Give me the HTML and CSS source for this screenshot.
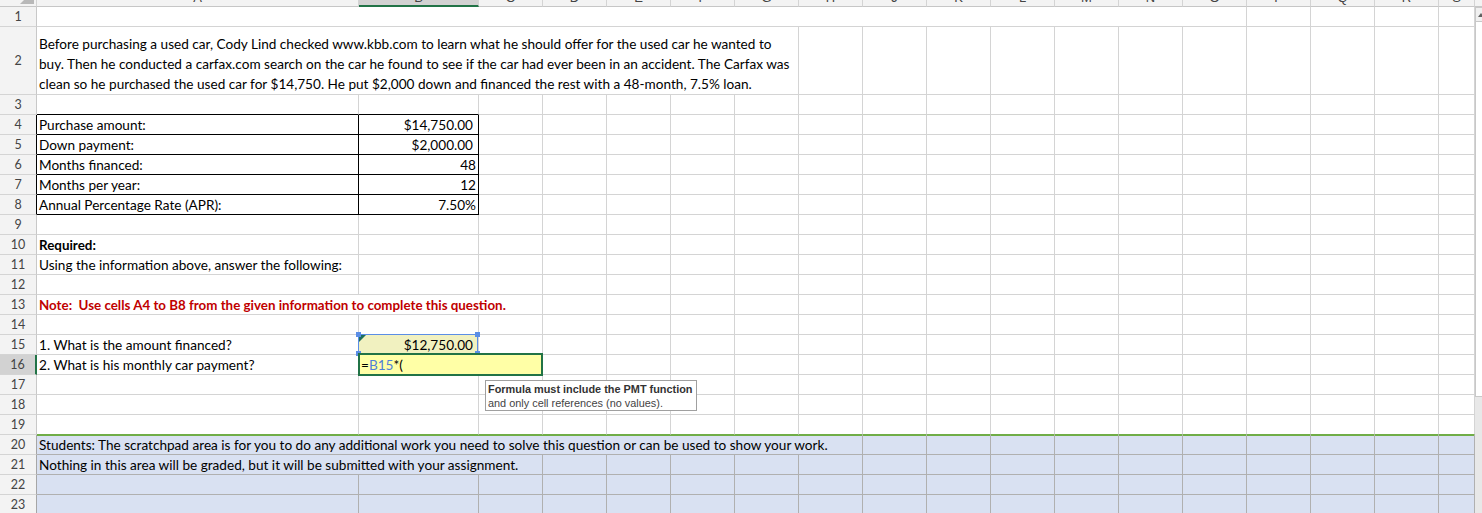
FILE: index.html
```html
<!DOCTYPE html>
<html>
<head>
<meta charset="utf-8">
<link rel="stylesheet" href="styles.css">
</head>
<body>
<div class="app">
  <div class="sheet">
    <div class="row hdr">
      <div class="corner"><span class="tri"></span></div>
      <div class="ch">A</div><div class="ch sel">B</div><div class="ch">C</div><div class="ch">D</div><div class="ch">E</div><div class="ch">F</div><div class="ch">G</div><div class="ch">H</div><div class="ch">J</div><div class="ch">K</div><div class="ch">L</div><div class="ch">M</div><div class="ch">N</div><div class="ch">O</div><div class="ch">P</div><div class="ch">Q</div><div class="ch">R</div><div class="ch">S</div>
    </div>
    <div class="row">
      <div class="rh">1</div><div class="c s14"></div><div class="c"></div><div class="c"></div><div class="c"></div><div class="c"></div>
    </div>
    <div class="row r2">
      <div class="rh">2</div>
      <div class="c s7 wrap"><div>Before purchasing a used car, Cody Lind checked www.kbb.com to learn what he should offer for the used car he wanted to<br>buy. Then he conducted a carfax.com search on the car he found to see if the car had ever been in an accident. The Carfax was<br>clean so he purchased the used car for $14,750. He put $2,000 down and financed the rest with a 48-month, 7.5% loan.</div></div>
      <div class="c"></div><div class="c"></div><div class="c"></div><div class="c"></div><div class="c"></div><div class="c"></div><div class="c"></div><div class="c"></div><div class="c"></div><div class="c"></div><div class="c"></div>
    </div>
    <div class="row">
      <div class="rh">3</div><div class="c topline"></div><div class="c topline"></div>
      <div class="c"></div><div class="c"></div><div class="c"></div><div class="c"></div><div class="c"></div><div class="c"></div><div class="c"></div><div class="c"></div><div class="c"></div><div class="c"></div><div class="c"></div><div class="c"></div><div class="c"></div><div class="c"></div><div class="c"></div><div class="c"></div>
    </div>
    <div class="row">
      <div class="rh blk">4</div><div class="c tbox">Purchase amount:</div><div class="c tbox num cur">$14,750.00</div>
      <div class="c"></div><div class="c"></div><div class="c"></div><div class="c"></div><div class="c"></div><div class="c"></div><div class="c"></div><div class="c"></div><div class="c"></div><div class="c"></div><div class="c"></div><div class="c"></div><div class="c"></div><div class="c"></div><div class="c"></div><div class="c"></div>
    </div>
    <div class="row">
      <div class="rh blk">5</div><div class="c tbox">Down payment:</div><div class="c tbox num cur">$2,000.00</div>
      <div class="c"></div><div class="c"></div><div class="c"></div><div class="c"></div><div class="c"></div><div class="c"></div><div class="c"></div><div class="c"></div><div class="c"></div><div class="c"></div><div class="c"></div><div class="c"></div><div class="c"></div><div class="c"></div><div class="c"></div><div class="c"></div>
    </div>
    <div class="row">
      <div class="rh blk">6</div><div class="c tbox">Months financed:</div><div class="c tbox num">48</div>
      <div class="c"></div><div class="c"></div><div class="c"></div><div class="c"></div><div class="c"></div><div class="c"></div><div class="c"></div><div class="c"></div><div class="c"></div><div class="c"></div><div class="c"></div><div class="c"></div><div class="c"></div><div class="c"></div><div class="c"></div><div class="c"></div>
    </div>
    <div class="row">
      <div class="rh blk">7</div><div class="c tbox">Months per year:</div><div class="c tbox num">12</div>
      <div class="c"></div><div class="c"></div><div class="c"></div><div class="c"></div><div class="c"></div><div class="c"></div><div class="c"></div><div class="c"></div><div class="c"></div><div class="c"></div><div class="c"></div><div class="c"></div><div class="c"></div><div class="c"></div><div class="c"></div><div class="c"></div>
    </div>
    <div class="row">
      <div class="rh blk">8</div><div class="c tbox">Annual Percentage Rate (APR):</div><div class="c tbox num">7.50%</div>
      <div class="c"></div><div class="c"></div><div class="c"></div><div class="c"></div><div class="c"></div><div class="c"></div><div class="c"></div><div class="c"></div><div class="c"></div><div class="c"></div><div class="c"></div><div class="c"></div><div class="c"></div><div class="c"></div><div class="c"></div><div class="c"></div>
    </div>
    <div class="row">
      <div class="rh">9</div><div class="c"></div><div class="c"></div>
      <div class="c"></div><div class="c"></div><div class="c"></div><div class="c"></div><div class="c"></div><div class="c"></div><div class="c"></div><div class="c"></div><div class="c"></div><div class="c"></div><div class="c"></div><div class="c"></div><div class="c"></div><div class="c"></div><div class="c"></div><div class="c"></div>
    </div>
    <div class="row">
      <div class="rh">10</div><div class="c bold">Required:</div><div class="c"></div>
      <div class="c"></div><div class="c"></div><div class="c"></div><div class="c"></div><div class="c"></div><div class="c"></div><div class="c"></div><div class="c"></div><div class="c"></div><div class="c"></div><div class="c"></div><div class="c"></div><div class="c"></div><div class="c"></div><div class="c"></div><div class="c"></div>
    </div>
    <div class="row">
      <div class="rh">11</div><div class="c">Using the information above, answer the following:</div><div class="c"></div>
      <div class="c"></div><div class="c"></div><div class="c"></div><div class="c"></div><div class="c"></div><div class="c"></div><div class="c"></div><div class="c"></div><div class="c"></div><div class="c"></div><div class="c"></div><div class="c"></div><div class="c"></div><div class="c"></div><div class="c"></div><div class="c"></div>
    </div>
    <div class="row">
      <div class="rh">12</div><div class="c"></div><div class="c"></div>
      <div class="c"></div><div class="c"></div><div class="c"></div><div class="c"></div><div class="c"></div><div class="c"></div><div class="c"></div><div class="c"></div><div class="c"></div><div class="c"></div><div class="c"></div><div class="c"></div><div class="c"></div><div class="c"></div><div class="c"></div><div class="c"></div>
    </div>
    <div class="row">
      <div class="rh">13</div><div class="c s3 note">Note:&nbsp; Use cells A4 to B8 from the given information to complete this question.</div>
      <div class="c"></div><div class="c"></div><div class="c"></div><div class="c"></div><div class="c"></div><div class="c"></div><div class="c"></div><div class="c"></div><div class="c"></div><div class="c"></div><div class="c"></div><div class="c"></div><div class="c"></div><div class="c"></div><div class="c"></div>
    </div>
    <div class="row">
      <div class="rh">14</div><div class="c"></div><div class="c"></div>
      <div class="c"></div><div class="c"></div><div class="c"></div><div class="c"></div><div class="c"></div><div class="c"></div><div class="c"></div><div class="c"></div><div class="c"></div><div class="c"></div><div class="c"></div><div class="c"></div><div class="c"></div><div class="c"></div><div class="c"></div><div class="c"></div>
    </div>
    <div class="row">
      <div class="rh">15</div><div class="c">1. What is the amount financed?</div>
      <div class="c num cur ref"><span class="err"></span>$12,750.00<span class="refbox"><i class="h tl"></i><i class="h tr"></i><i class="h bl"></i><i class="h br"></i></span></div>
      <div class="c"></div><div class="c"></div><div class="c"></div><div class="c"></div><div class="c"></div><div class="c"></div><div class="c"></div><div class="c"></div><div class="c"></div><div class="c"></div><div class="c"></div><div class="c"></div><div class="c"></div><div class="c"></div><div class="c"></div><div class="c"></div>
    </div>
    <div class="row">
      <div class="rh act">16</div><div class="c">2. What is his monthly car payment?</div>
      <div class="c s2 edit">=<span class="refc">B15</span>*(</div>
      <div class="c"></div><div class="c"></div><div class="c"></div><div class="c"></div><div class="c"></div><div class="c"></div><div class="c"></div><div class="c"></div><div class="c"></div><div class="c"></div><div class="c"></div><div class="c"></div><div class="c"></div><div class="c"></div><div class="c"></div>
    </div>
    <div class="row">
      <div class="rh">17</div><div class="c"></div><div class="c"></div>
      <div class="c"></div><div class="c"></div><div class="c"></div><div class="c"></div><div class="c"></div><div class="c"></div><div class="c"></div><div class="c"></div><div class="c"></div><div class="c"></div><div class="c"></div><div class="c"></div><div class="c"></div><div class="c"></div><div class="c"></div><div class="c"></div>
    </div>
    <div class="row">
      <div class="rh">18</div><div class="c"></div><div class="c"></div>
      <div class="c"></div><div class="c"></div><div class="c"></div><div class="c"></div><div class="c"></div><div class="c"></div><div class="c"></div><div class="c"></div><div class="c"></div><div class="c"></div><div class="c"></div><div class="c"></div><div class="c"></div><div class="c"></div><div class="c"></div><div class="c"></div>
    </div>
    <div class="row g19">
      <div class="rh">19</div><div class="c"></div><div class="c"></div>
      <div class="c"></div><div class="c"></div><div class="c"></div><div class="c"></div><div class="c"></div><div class="c"></div><div class="c"></div><div class="c"></div><div class="c"></div><div class="c"></div><div class="c"></div><div class="c"></div><div class="c"></div><div class="c"></div><div class="c"></div><div class="c"></div>
    </div>
    <div class="row blue first">
      <div class="rh">20</div><div class="c s8">Students: The scratchpad area is for you to do any additional work you need to solve this question or can be used to show your work.</div>
      <div class="c"></div><div class="c"></div><div class="c"></div><div class="c"></div><div class="c"></div><div class="c"></div><div class="c"></div><div class="c"></div><div class="c"></div><div class="c"></div>
    </div>
    <div class="row blue">
      <div class="rh">21</div><div class="c s3">Nothing in this area will be graded, but it will be submitted with your assignment.</div>
      <div class="c"></div><div class="c"></div><div class="c"></div><div class="c"></div><div class="c"></div><div class="c"></div><div class="c"></div><div class="c"></div><div class="c"></div><div class="c"></div><div class="c"></div><div class="c"></div><div class="c"></div><div class="c"></div><div class="c"></div>
    </div>
    <div class="row blue">
      <div class="rh">22</div><div class="c"></div><div class="c"></div>
      <div class="c"></div><div class="c"></div><div class="c"></div><div class="c"></div><div class="c"></div><div class="c"></div><div class="c"></div><div class="c"></div><div class="c"></div><div class="c"></div><div class="c"></div><div class="c"></div><div class="c"></div><div class="c"></div><div class="c"></div><div class="c"></div>
    </div>
    <div class="row blue">
      <div class="rh">23</div><div class="c"></div><div class="c"></div>
      <div class="c"></div><div class="c"></div><div class="c"></div><div class="c"></div><div class="c"></div><div class="c"></div><div class="c"></div><div class="c"></div><div class="c"></div><div class="c"></div><div class="c"></div><div class="c"></div><div class="c"></div><div class="c"></div><div class="c"></div><div class="c"></div>
    </div>

    <div class="tip">
      <div class="tip-title">Formula must include the PMT function</div>
      <div class="tip-body">and only cell references (no values).</div>
    </div>
  </div>
  <div class="vscroll">
    <div class="vs-head"></div>
    <div class="vs-btn"><span class="vs-arrow"></span></div>
    <div class="vs-thumb"></div>
  </div>
</div>
</body>
</html>
```

FILE: styles.css
```css
* { box-sizing: border-box; }

html, body {
  margin: 0;
  padding: 0;
  background: #fff;
  overflow: hidden;
}

body {
  font-family: Lato, "Open Sans", "Liberation Sans", sans-serif;
  font-size: 13.6px;
  color: #000;
}

.app {
  display: flex;
  width: 1482px;
  height: 513px;
  overflow: hidden;
}

.sheet {
  position: relative;
  width: 1475px;
  flex: none;
}

.row {
  display: grid;
  grid-template-columns: 37px 322px 120px repeat(15, 64px) 36px;
  height: 20px;
}

.row.r2 { height: 68px; }
.row.hdr { height: 7px; }

/* column header */
.corner {
  position: relative;
  background: #f3f3f3;
  border-right: 1px solid #d4d4d4;
  border-bottom: 1px solid #c6c6c6;
  overflow: hidden;
}
.tri {
  position: absolute;
  right: 2px;
  bottom: 2px;
  width: 14px;
  height: 14px;
  background: #b8b8b8;
  clip-path: polygon(100% 0, 100% 100%, 0 100%);
}
.ch {
  background: #f3f3f3;
  border-right: 1px solid #d4d4d4;
  border-bottom: 1px solid #c6c6c6;
  overflow: hidden;
  display: flex;
  align-items: flex-end;
  justify-content: center;
  font-family: "Liberation Sans", Arial, sans-serif;
  font-size: 13px;
  line-height: 12px;
  padding-bottom: 2px;
  color: #444;
}
.ch.sel {
  background: #d2d2d2;
  border-bottom: 2px solid #217346;
  padding-bottom: 1px;
}

/* row header */
.rh {
  background: #f3f3f3;
  border-right: 1px solid #c8c8c8;
  border-bottom: 1px solid #d4d4d4;
  display: flex;
  align-items: center;
  justify-content: center;
  font-size: 12.5px;
  color: #444;
}
.rh.blk { border-right-color: #000; }
.rh.act {
  background: #d2d2d2;
  border-right: 2px solid #217346;
}

/* cells */
.c {
  border-right: 1px solid #d4d4d4;
  border-bottom: 1px solid #d4d4d4;
  padding: 0 2px;
  display: flex;
  align-items: flex-end;
  white-space: nowrap;
  min-width: 0;
  line-height: 17px;
}

.s2 { grid-column: span 2; }
.s3 { grid-column: span 3; }
.s7 { grid-column: span 7; }
.s8 { grid-column: span 8; }
.s14 { grid-column: span 14; }

.wrap { line-height: 20px; }

.topline { border-bottom-color: #000; }
.tbox {
  border-right-color: #000;
  border-bottom-color: #000;
}

.num { justify-content: flex-end; }
.cur { padding-right: 5px; }

.bold {
  font-weight: 700;
  font-size: 13.4px;
}
.note {
  font-weight: 700;
  font-size: 13.35px;
  color: #c00000;
}

/* referenced cell B15 */
.ref {
  position: relative;
  background: #f1f1c0;
}
.err {
  position: absolute;
  left: 0;
  top: 0;
  width: 0;
  height: 0;
  border-top: 7px solid #1e6f5c;
  border-right: 7px solid transparent;
}
.refbox {
  position: absolute;
  left: -1px;
  top: -1px;
  right: 0;
  bottom: 0;
  border: 1px solid #5b8ee6;
  pointer-events: none;
}
.h {
  position: absolute;
  width: 5px;
  height: 5px;
  background: #5b8ee6;
}
.h.tl { left: -3px; top: -3px; }
.h.tr { right: -3px; top: -3px; }
.h.bl { left: -3px; bottom: -3px; }
.h.br { right: -3px; bottom: -3px; }

/* edit cell B16 */
.edit {
  position: relative;
  background: #ffffa6;
  z-index: 2;
}
.edit::after {
  content: "";
  position: absolute;
  left: -1px;
  top: -2px;
  right: -1px;
  bottom: -2px;
  border: 2px solid #217346;
}
.refc { color: #4f81d8; }

/* scratchpad */
.g19 .c { border-bottom-color: #70ad47; }
.blue .c {
  background: #d9e1f2;
  border-right-color: #b0b0b0;
  border-bottom-color: #b0b0b0;
}
.blue .rh { border-right-color: #a6a6a6; }
.blue.first .c { box-shadow: inset 0 1px 0 #70ad47; }

/* tooltip */
.tip {
  position: absolute;
  left: 485px;
  top: 380px;
  width: 212px;
  height: 31px;
  background: #fff;
  border: 1px solid #a0a0a0;
  padding: 1px 0 0 2px;
  font-family: "Liberation Sans", Arial, sans-serif;
  font-size: 10.9px;
  line-height: 14px;
  color: #333;
  z-index: 3;
}
.tip-title { font-weight: 700; }
.tip-body { color: #444; }

/* vertical scrollbar */
.vscroll {
  width: 7px;
  flex: none;
  background: #e8e8e8;
  display: flex;
  flex-direction: column;
}
.vs-head {
  height: 7px;
  background: #f3f3f3;
  border-bottom: 1px solid #c6c6c6;
}
.vs-btn {
  height: 14px;
  background: #f0f0f0;
  border-left: 1px solid #c8c8c8;
  border-top: 1px solid #c8c8c8;
  position: relative;
}
.vs-arrow {
  position: absolute;
  left: 2px;
  top: 5px;
  width: 0;
  height: 0;
  border-left: 3px solid transparent;
  border-right: 3px solid transparent;
  border-bottom: 4px solid #606060;
}
.vs-thumb {
  height: 376px;
  background: #fff;
  border: 1px solid #c8c8c8;
  border-right: none;
}
```
